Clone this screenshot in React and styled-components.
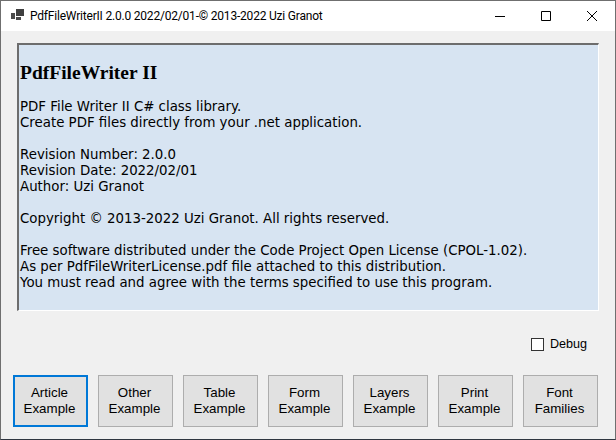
import React from 'react'
import styled, { createGlobalStyle } from 'styled-components'

const GlobalStyle = createGlobalStyle`
  html, body {
    margin: 0;
    padding: 0;
    background: #f0f0f0;
  }
`

const buttons = [
  ['Article', 'Example'],
  ['Other', 'Example'],
  ['Table', 'Example'],
  ['Form', 'Example'],
  ['Layers', 'Example'],
  ['Print', 'Example'],
  ['Font', 'Families'],
]

const App = () => {
  return (
    <>
      <GlobalStyle />
      <Window>
        <TitleBar>
          <AppIcon width="16" height="16" viewBox="0 0 16 16">
            <path d="M0 5h4v6H0z" fill="#4a4a4a" />
            <path d="M5 1h8v7H5z" fill="#404040" />
            <path d="M5 9h5v3H5z" fill="#4a4a4a" />
          </AppIcon>
          <TitleText>PdfFileWriterII 2.0.0 2022/02/01-© 2013-2022 Uzi Granot</TitleText>
          <Controls>
            <ControlButton>
              <svg width="10" height="10" viewBox="0 0 10 10">
                <path d="M0 5.5h10" stroke="#000" fill="none" />
              </svg>
            </ControlButton>
            <ControlButton>
              <svg width="10" height="10" viewBox="0 0 10 10">
                <path d="M.5.5h9v9h-9z" stroke="#000" fill="none" />
              </svg>
            </ControlButton>
            <ControlButton>
              <svg width="10" height="10" viewBox="0 0 10 10">
                <path d="M0 0l10 10M10 0L0 10" stroke="#000" fill="none" />
              </svg>
            </ControlButton>
          </Controls>
        </TitleBar>
        <Content>
          <InfoPanel>
            <Heading>PdfFileWriter II</Heading>
            <Para>
              PDF File Writer II C# class library.
              <br />
              Create PDF files directly from your .net application.
            </Para>
            <Para>
              Revision Number: 2.0.0
              <br />
              Revision Date: 2022/02/01
              <br />
              Author: Uzi Granot
            </Para>
            <Para>Copyright © 2013-2022 Uzi Granot. All rights reserved.</Para>
            <Para>
              Free software distributed under the Code Project Open License (CPOL-1.02).
              <br />
              As per PdfFileWriterLicense.pdf file attached to this distribution.
              <br />
              You must read and agree with the terms specified to use this program.
            </Para>
          </InfoPanel>
          <DebugRow>
            <CheckBox />
            <DebugLabel>Debug</DebugLabel>
          </DebugRow>
          <ButtonRow>
            {buttons.map((lines, index) => (
              <ActionButton key={lines.join('-')} $focused={index === 0}>
                {lines[0]}
                <br />
                {lines[1]}
              </ActionButton>
            ))}
          </ButtonRow>
        </Content>
      </Window>
    </>
  )
}

const Window = styled.div`
  box-sizing: border-box;
  width: 616px;
  height: 440px;
  display: flex;
  flex-direction: column;
  overflow: hidden;
  border: 1px solid #6f6f6f;
  border-bottom-color: #2f3640;
  background: #f0f0f0;
`
const TitleBar = styled.div`
  height: 30px;
  flex: none;
  display: flex;
  align-items: center;
  background: #fff;
  padding-left: 10px;
`
const AppIcon = styled.svg`
  flex: none;
  margin-right: 3px;
`
const TitleText = styled.div`
  flex: 1;
  font: 12px Roboto, 'Noto Sans', sans-serif;
  letter-spacing: -0.2px;
  color: #000;
  white-space: nowrap;
`
const Controls = styled.div`
  display: flex;
  height: 100%;
`
const ControlButton = styled.div`
  width: 46px;
  display: flex;
  align-items: center;
  justify-content: center;
`
const Content = styled.div`
  flex: 1;
  display: flex;
  flex-direction: column;
  padding: 12px 0 0 12px;
`
const InfoPanel = styled.div`
  box-sizing: border-box;
  width: 582px;
  height: 268px;
  margin-left: 4px;
  padding: 17px 0 0 1px;
  background: #d7e4f2;
  border: 2px solid;
  border-color: #6d6d6d #fff #fff #6d6d6d;
  border-right-width: 1px;
  border-bottom-width: 1px;
  font: 13.35px/16px 'DejaVu Sans', Verdana, sans-serif;
  color: #000;
`
const Heading = styled.div`
  font: bold 19.5px/22px 'Liberation Serif', serif;
  margin-bottom: 15px;
`
const Para = styled.p`
  margin: 0 0 16px;
  white-space: nowrap;
`
const DebugRow = styled.div`
  display: flex;
  align-items: center;
  gap: 6px;
  margin: 25px 0 0 518px;
  height: 16px;
`
const CheckBox = styled.div`
  box-sizing: border-box;
  width: 13px;
  height: 13px;
  border: 1px solid #333;
  background: #fff;
`
const DebugLabel = styled.span`
  font: 12.6px 'Liberation Sans', Arial, sans-serif;
  color: #000;
`
const ButtonRow = styled.div`
  display: flex;
  gap: 10px;
  margin-top: 23px;
`
const ActionButton = styled.div`
  box-sizing: border-box;
  width: 75px;
  height: 52px;
  text-align: center;
  background: #e1e1e1;
  border: ${(p) => (p.$focused ? '2px solid #0078d7' : '1px solid #adadad')};
  padding-top: ${(p) => (p.$focused ? '8px' : '9px')};
  padding-right: 2px;
  font: 13.33px/16px 'Liberation Sans', Arial, sans-serif;
  color: #000;
`

export default App
